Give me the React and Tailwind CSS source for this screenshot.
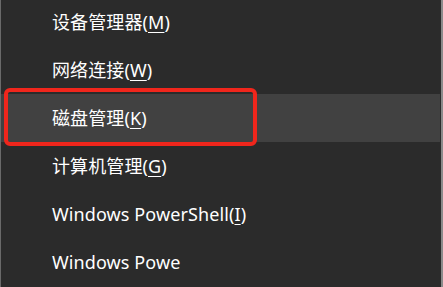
import React from "react";

const items = [
  { label: "设备管理器(", key: "M", end: ")" },
  { label: "网络连接(", key: "W", end: ")" },
  { label: "磁盘管理(", key: "K", end: ")", active: true },
  { label: "计算机管理(", key: "G", end: ")" },
  { label: "Windows PowerShell(", key: "I", end: ")" },
  { label: "Windows Powe", key: "", end: "" },
];

export default function App() {
  return (
    <div
      className="relative w-[443px] h-[287px] overflow-hidden bg-[#2b2b2b] text-white"
      style={{ fontFamily: '"Noto Sans", "Noto Sans CJK SC", sans-serif' }}
    >
      <div className="absolute left-0 top-0 bottom-0 w-px bg-[#6a6a6a]" />
      <div className="absolute right-0 top-0 bottom-0 w-[2px] bg-[#8a8a8a]" />
      <div className="flex flex-col -mt-[2px] pl-px pr-[3px]">
        {items.map((it, i) => (
          <div
            key={i}
            className={`flex items-center h-[48px] pl-[51px] text-[18px] leading-none ${
              it.active ? "bg-[#414141]" : ""
            }`}
          >
            <span className="tracking-[0.1px]">
              {it.label}
              {it.key && <span className="underline underline-offset-[3px] decoration-1">{it.key}</span>}
              {it.end}
            </span>
          </div>
        ))}
      </div>
      <div className="absolute left-[4px] top-[88px] w-[253px] h-[58px] border-4 border-[#f0261c] rounded-[6px]" />
    </div>
  );
}
